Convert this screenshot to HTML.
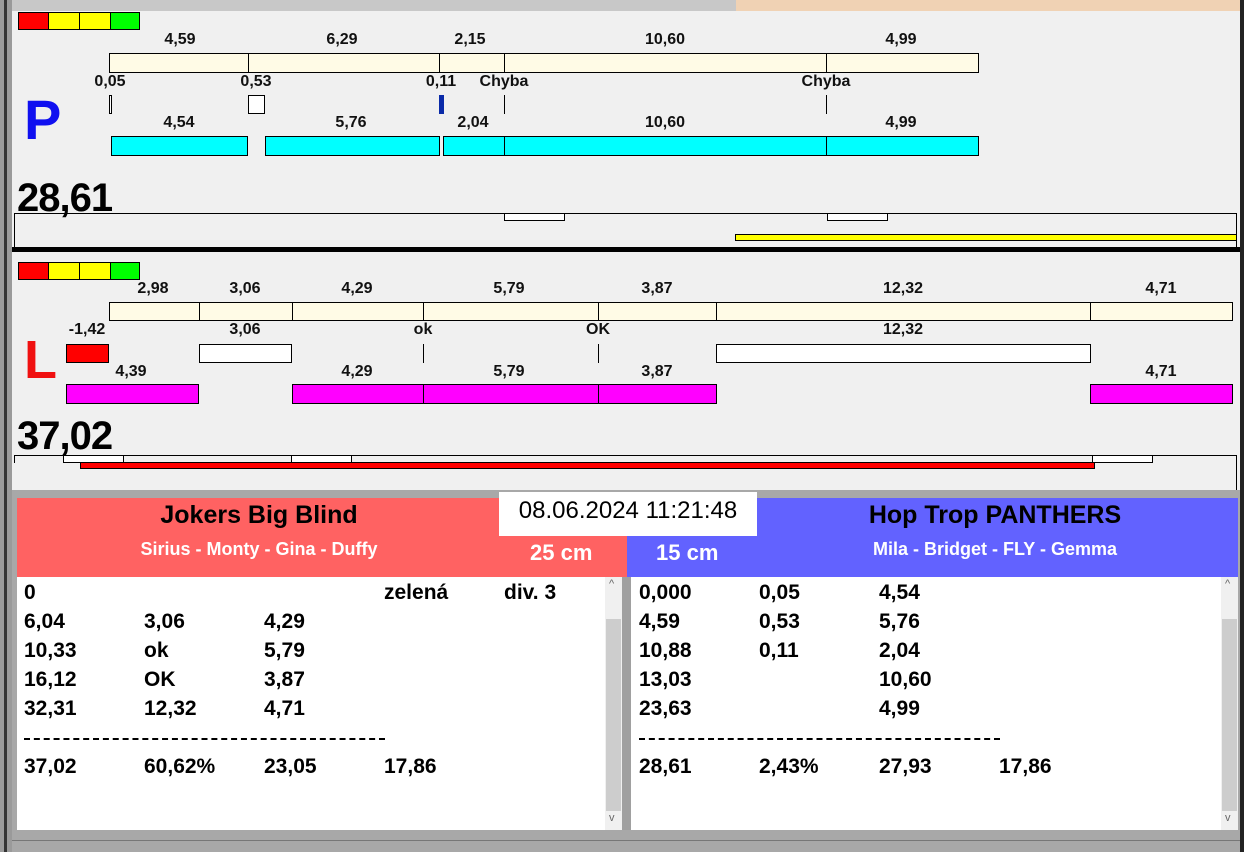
<!DOCTYPE html>
<html><head><meta charset="utf-8"><style>
*{margin:0;padding:0;box-sizing:border-box}
body{width:1244px;height:852px;background:#a8a8a8;position:relative;overflow:hidden;font-family:"Liberation Sans",Arial,sans-serif}
div,span{position:absolute}
.pn{background:#f0f0f0}
.l{font-size:16px;font-weight:bold;color:#111;transform:translateX(-50%);white-space:nowrap;line-height:16px}
.b{border:1px solid #000}
.cr{background:#fffbe6}.cy{background:#00ffff}.mg{background:#ff00ff}.wh{background:#fff}
.t{width:1px;background:#000}
.big{font-size:40px;font-weight:bold;line-height:40px;color:#000;letter-spacing:-1px}
.r{font-size:21px;font-weight:bold;line-height:24px;color:#000;white-space:nowrap}
</style></head><body>
<!-- top tab strip -->
<div style="left:0;top:0;width:1244px;height:11px;background:#c8c8c8"></div>
<div style="left:736px;top:0;width:504px;height:11px;background:#f0d2b4"></div>
<div style="left:0;top:0;width:12px;height:852px;background:#9a9a9a"></div>
<div style="left:4px;top:0;width:3px;height:852px;background:#333"></div>
<div style="left:1240px;top:0;width:4px;height:852px;background:#222"></div>

<!-- P panel -->
<div class="pn" style="left:12px;top:11px;width:1228px;height:236px"></div>
<div class="b" style="left:18px;top:12px;width:31px;height:18px;background:#f00"></div>
<div class="b" style="left:48px;top:12px;width:32px;height:18px;background:#ff0"></div>
<div class="b" style="left:79px;top:12px;width:32px;height:18px;background:#ff0"></div>
<div class="b" style="left:110px;top:12px;width:30px;height:18px;background:#0f0"></div>

<span class="l" style="left:180px;top:32px">4,59</span>
<span class="l" style="left:342px;top:32px">6,29</span>
<span class="l" style="left:470px;top:32px">2,15</span>
<span class="l" style="left:665px;top:32px">10,60</span>
<span class="l" style="left:901px;top:32px">4,99</span>
<div class="b cr" style="left:109px;top:53px;width:870px;height:20px"></div>
<div class="t" style="left:248px;top:53px;height:20px"></div>
<div class="t" style="left:439px;top:53px;height:20px"></div>
<div class="t" style="left:504px;top:53px;height:20px"></div>
<div class="t" style="left:826px;top:53px;height:20px"></div>

<span class="l" style="left:110px;top:74px">0,05</span>
<span class="l" style="left:256px;top:74px">0,53</span>
<span class="l" style="left:441px;top:74px">0,11</span>
<span class="l" style="left:504px;top:74px">Chyba</span>
<span class="l" style="left:826px;top:74px">Chyba</span>
<div class="b wh" style="left:109px;top:95px;width:3px;height:19px"></div>
<div class="b wh" style="left:248px;top:95px;width:17px;height:19px"></div>
<div style="left:439px;top:95px;width:5px;height:19px;background:#0a2aa8"></div>
<div class="t" style="left:504px;top:95px;height:19px"></div>
<div class="t" style="left:826px;top:95px;height:19px"></div>
<span style="left:24px;top:88px;font-size:56px;font-weight:bold;color:#1010f0;line-height:64px">P</span>

<span class="l" style="left:179px;top:115px">4,54</span>
<span class="l" style="left:351px;top:115px">5,76</span>
<span class="l" style="left:473px;top:115px">2,04</span>
<span class="l" style="left:665px;top:115px">10,60</span>
<span class="l" style="left:901px;top:115px">4,99</span>
<div class="b cy" style="left:111px;top:136px;width:137px;height:20px"></div>
<div class="b cy" style="left:265px;top:136px;width:175px;height:20px"></div>
<div class="b cy" style="left:443px;top:136px;width:536px;height:20px"></div>
<div class="t" style="left:504px;top:136px;height:20px"></div>
<div class="t" style="left:826px;top:136px;height:20px"></div>

<span class="big" style="left:17px;top:178px">28,61</span>
<div style="left:14px;top:213px;width:1223px;height:1px;background:#000"></div>
<div style="left:14px;top:213px;width:1px;height:34px;background:#000"></div>
<div style="left:1236px;top:213px;width:1px;height:34px;background:#000"></div>
<div class="b wh" style="left:504px;top:213px;width:61px;height:8px"></div>
<div class="b wh" style="left:827px;top:213px;width:61px;height:8px"></div>
<div class="b" style="left:735px;top:234px;width:502px;height:7px;background:#ff0"></div>
<div style="left:12px;top:247px;width:1228px;height:5px;background:#000"></div>

<!-- L panel -->
<div class="pn" style="left:12px;top:252px;width:1228px;height:238px"></div>
<div class="b" style="left:18px;top:262px;width:31px;height:18px;background:#f00"></div>
<div class="b" style="left:48px;top:262px;width:32px;height:18px;background:#ff0"></div>
<div class="b" style="left:79px;top:262px;width:32px;height:18px;background:#ff0"></div>
<div class="b" style="left:110px;top:262px;width:30px;height:18px;background:#0f0"></div>

<span class="l" style="left:153px;top:281px">2,98</span>
<span class="l" style="left:245px;top:281px">3,06</span>
<span class="l" style="left:357px;top:281px">4,29</span>
<span class="l" style="left:509px;top:281px">5,79</span>
<span class="l" style="left:657px;top:281px">3,87</span>
<span class="l" style="left:903px;top:281px">12,32</span>
<span class="l" style="left:1161px;top:281px">4,71</span>
<div class="b cr" style="left:109px;top:302px;width:1124px;height:19px"></div>
<div class="t" style="left:199px;top:302px;height:19px"></div>
<div class="t" style="left:292px;top:302px;height:19px"></div>
<div class="t" style="left:423px;top:302px;height:19px"></div>
<div class="t" style="left:598px;top:302px;height:19px"></div>
<div class="t" style="left:716px;top:302px;height:19px"></div>
<div class="t" style="left:1090px;top:302px;height:19px"></div>

<span class="l" style="left:87px;top:322px">-1,42</span>
<span class="l" style="left:245px;top:322px">3,06</span>
<span class="l" style="left:423px;top:322px">ok</span>
<span class="l" style="left:598px;top:322px">OK</span>
<span class="l" style="left:903px;top:322px">12,32</span>
<div class="b" style="left:66px;top:344px;width:43px;height:19px;background:#f00"></div>
<div class="b wh" style="left:199px;top:344px;width:93px;height:19px"></div>
<div class="b wh" style="left:716px;top:344px;width:375px;height:19px"></div>
<div class="t" style="left:423px;top:344px;height:19px"></div>
<div class="t" style="left:598px;top:344px;height:19px"></div>
<span style="left:24px;top:330px;font-size:54px;font-weight:bold;color:#f01010;line-height:60px">L</span>

<span class="l" style="left:131px;top:364px">4,39</span>
<span class="l" style="left:357px;top:364px">4,29</span>
<span class="l" style="left:509px;top:364px">5,79</span>
<span class="l" style="left:657px;top:364px">3,87</span>
<span class="l" style="left:1161px;top:364px">4,71</span>
<div class="b mg" style="left:66px;top:384px;width:133px;height:20px"></div>
<div class="b mg" style="left:292px;top:384px;width:425px;height:20px"></div>
<div class="t" style="left:423px;top:384px;height:20px"></div>
<div class="t" style="left:598px;top:384px;height:20px"></div>
<div class="b mg" style="left:1090px;top:384px;width:143px;height:20px"></div>

<span class="big" style="left:17px;top:416px">37,02</span>
<div style="left:14px;top:455px;width:1223px;height:1px;background:#000"></div>
<div style="left:14px;top:455px;width:1px;height:8px;background:#000"></div>
<div style="left:1236px;top:455px;width:1px;height:35px;background:#000"></div>
<div class="b wh" style="left:63px;top:455px;width:61px;height:8px"></div>
<div class="b wh" style="left:291px;top:455px;width:61px;height:8px"></div>
<div class="b wh" style="left:1092px;top:455px;width:61px;height:8px"></div>
<div class="b" style="left:80px;top:462px;width:1015px;height:7px;background:#f00"></div>

<!-- headers -->
<div style="left:17px;top:498px;width:610px;height:79px;background:#ff6262"></div>
<div style="left:627px;top:498px;width:611px;height:79px;background:#6262ff"></div>
<span style="left:17px;top:500px;width:484px;text-align:center;font-size:25px;font-weight:bold;line-height:30px">Jokers Big Blind</span>
<span style="left:17px;top:538px;width:484px;text-align:center;font-size:18px;font-weight:bold;color:#fff;line-height:22px">Sirius - Monty - Gina - Duffy</span>
<div style="left:499px;top:492px;width:258px;height:44px;background:#fff"></div>
<span style="left:499px;top:496px;width:258px;text-align:center;font-size:24px;line-height:30px;color:#000">08.06.2024 11:21:48</span>
<span style="left:530px;top:540px;font-size:22px;font-weight:bold;color:#fff;line-height:26px">25 cm</span>
<span style="left:656px;top:540px;font-size:22px;font-weight:bold;color:#fff;line-height:26px">15 cm</span>
<span style="left:757px;top:500px;width:476px;text-align:center;font-size:25px;font-weight:bold;line-height:30px">Hop Trop PANTHERS</span>
<span style="left:757px;top:538px;width:476px;text-align:center;font-size:18px;font-weight:bold;color:#fff;line-height:22px">Mila - Bridget - FLY - Gemma</span>

<!-- lists -->
<div class="wh" style="left:17px;top:577px;width:605px;height:253px"></div>
<div style="left:605px;top:577px;width:17px;height:253px;background:#f0f0f0"></div>
<div style="left:606px;top:619px;width:15px;height:192px;background:#cdcdcd"></div>
<span style="left:609px;top:578px;font-size:11px;color:#666">^</span>
<span style="left:609px;top:812px;font-size:11px;color:#666">v</span>
<div style="left:622px;top:577px;width:9px;height:253px;background:#a0a0a0"></div>
<div class="wh" style="left:631px;top:577px;width:607px;height:253px"></div>
<div style="left:1221px;top:577px;width:17px;height:253px;background:#f0f0f0"></div>
<div style="left:1222px;top:619px;width:15px;height:192px;background:#cdcdcd"></div>
<span style="left:1225px;top:578px;font-size:11px;color:#666">^</span>
<span style="left:1225px;top:812px;font-size:11px;color:#666">v</span>

<span class="r" style="left:24px;top:581px">0</span><span class="r" style="left:384px;top:581px">zelená</span><span class="r" style="left:504px;top:581px">div. 3</span>
<span class="r" style="left:24px;top:610px">6,04</span><span class="r" style="left:144px;top:610px">3,06</span><span class="r" style="left:264px;top:610px">4,29</span>
<span class="r" style="left:24px;top:639px">10,33</span><span class="r" style="left:144px;top:639px">ok</span><span class="r" style="left:264px;top:639px">5,79</span>
<span class="r" style="left:24px;top:668px">16,12</span><span class="r" style="left:144px;top:668px">OK</span><span class="r" style="left:264px;top:668px">3,87</span>
<span class="r" style="left:24px;top:697px">32,31</span><span class="r" style="left:144px;top:697px">12,32</span><span class="r" style="left:264px;top:697px">4,71</span>
<div style="left:24px;top:738px;width:361px;height:0;border-top:2px dashed #000"></div>
<span class="r" style="left:24px;top:755px">37,02</span><span class="r" style="left:144px;top:755px">60,62%</span><span class="r" style="left:264px;top:755px">23,05</span><span class="r" style="left:384px;top:755px">17,86</span>

<span class="r" style="left:639px;top:581px">0,000</span><span class="r" style="left:759px;top:581px">0,05</span><span class="r" style="left:879px;top:581px">4,54</span>
<span class="r" style="left:639px;top:610px">4,59</span><span class="r" style="left:759px;top:610px">0,53</span><span class="r" style="left:879px;top:610px">5,76</span>
<span class="r" style="left:639px;top:639px">10,88</span><span class="r" style="left:759px;top:639px">0,11</span><span class="r" style="left:879px;top:639px">2,04</span>
<span class="r" style="left:639px;top:668px">13,03</span><span class="r" style="left:879px;top:668px">10,60</span>
<span class="r" style="left:639px;top:697px">23,63</span><span class="r" style="left:879px;top:697px">4,99</span>
<div style="left:639px;top:738px;width:361px;height:0;border-top:2px dashed #000"></div>
<span class="r" style="left:639px;top:755px">28,61</span><span class="r" style="left:759px;top:755px">2,43%</span><span class="r" style="left:879px;top:755px">27,93</span><span class="r" style="left:999px;top:755px">17,86</span>

<div style="left:12px;top:840px;width:1228px;height:1px;background:#777"></div>
</body></html>
